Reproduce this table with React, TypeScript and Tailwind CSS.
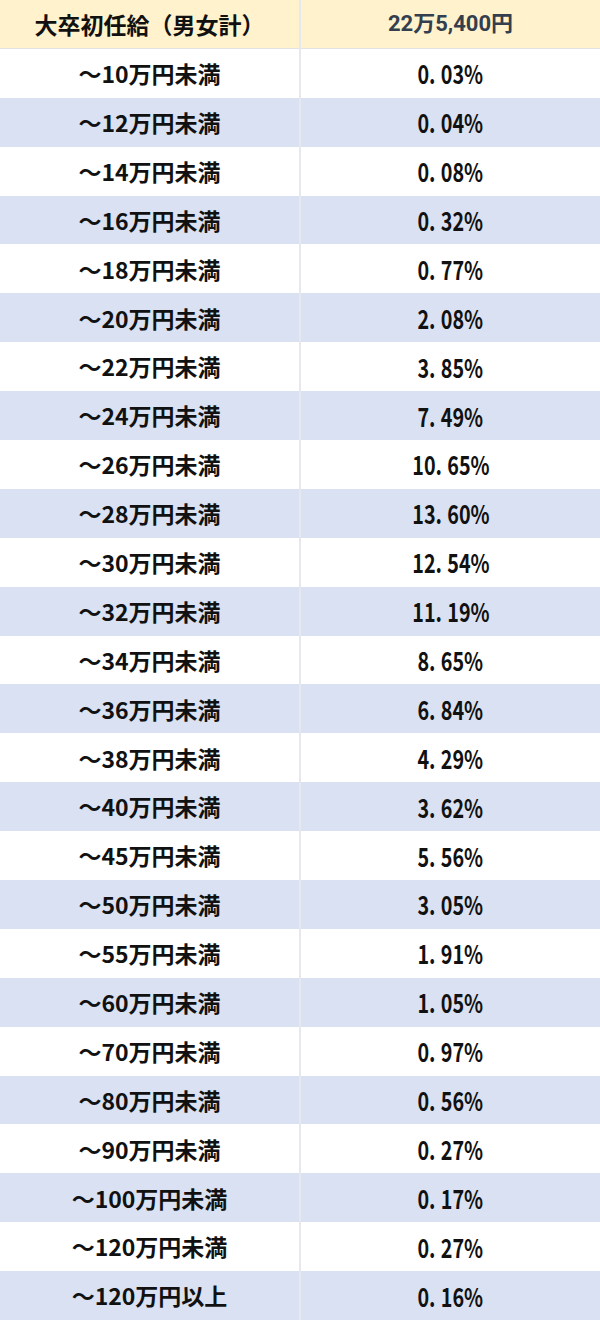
import React from "react";

const rows: [string, string][] = [
  ["〜10万円未満", "0.03%"],
  ["〜12万円未満", "0.04%"],
  ["〜14万円未満", "0.08%"],
  ["〜16万円未満", "0.32%"],
  ["〜18万円未満", "0.77%"],
  ["〜20万円未満", "2.08%"],
  ["〜22万円未満", "3.85%"],
  ["〜24万円未満", "7.49%"],
  ["〜26万円未満", "10.65%"],
  ["〜28万円未満", "13.60%"],
  ["〜30万円未満", "12.54%"],
  ["〜32万円未満", "11.19%"],
  ["〜34万円未満", "8.65%"],
  ["〜36万円未満", "6.84%"],
  ["〜38万円未満", "4.29%"],
  ["〜40万円未満", "3.62%"],
  ["〜45万円未満", "5.56%"],
  ["〜50万円未満", "3.05%"],
  ["〜55万円未満", "1.91%"],
  ["〜60万円未満", "1.05%"],
  ["〜70万円未満", "0.97%"],
  ["〜80万円未満", "0.56%"],
  ["〜90万円未満", "0.27%"],
  ["〜100万円未満", "0.17%"],
  ["〜120万円未満", "0.27%"],
  ["〜120万円以上", "0.16%"],
];

function Pct({ v }: { v: string }) {
  const [a, b] = v.split(".");
  return (
    <span className="inline-block scale-x-[0.76] font-['Noto_Sans_CJK_JP',sans-serif] text-[26px] font-bold leading-none text-[#111] tabular-nums">
      {a}
      <span className="mr-[7px]">.</span>
      {b}
    </span>
  );
}

export default function App() {
  return (
    <div className="h-[1320px] w-[600px] overflow-hidden bg-white">
      <div className="grid h-full grid-cols-[299px_1fr] grid-rows-[repeat(27,1fr)] gap-x-[2px] bg-[#e6e8ee]">
        <div className="flex items-center justify-center border-b border-[#e2e2e2] bg-[#fff2cc] font-['Noto_Sans_CJK_JP',sans-serif] text-[23px] font-bold text-[#111]">
          大卒初任給（男女計）
        </div>
        <div className="flex items-center justify-center border-b border-[#e2e2e2] bg-[#fff2cc] font-['Roboto','Noto_Sans_CJK_JP',sans-serif] text-[22px] font-bold text-[#333f4f]">
          22万5,400円
        </div>
        {rows.map(([label, v], i) => {
          const bg = i % 2 === 0 ? "bg-white" : "bg-[#d9e1f2]";
          return (
            <React.Fragment key={i}>
              <div
                className={`flex items-center justify-center ${bg} font-['Noto_Sans_CJK_JP',sans-serif] text-[23px] font-bold text-[#111]`}
              >
                {label}
              </div>
              <div className={`flex items-center justify-center ${bg}`}>
                <Pct v={v} />
              </div>
            </React.Fragment>
          );
        })}
      </div>
    </div>
  );
}
